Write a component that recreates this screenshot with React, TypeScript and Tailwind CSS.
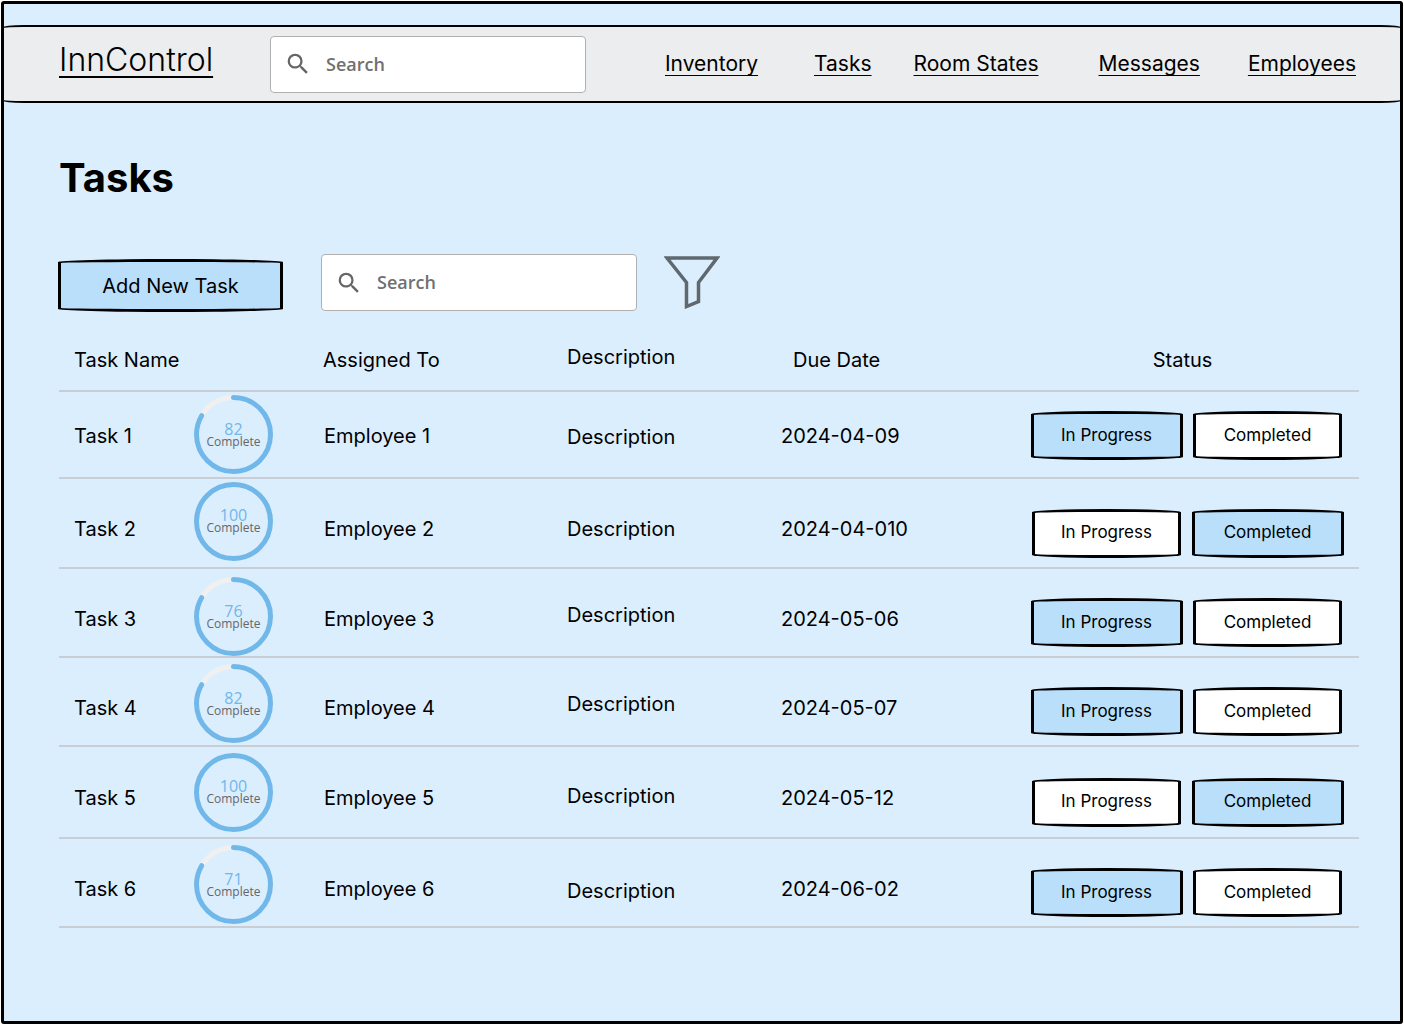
import React from "react";

const sketchEdge = "m-[3px] ring-3 ring-black rounded-[50%/1px]";

type Task = {
  name: string;
  percent: number;
  employee: string;
  due: string;
  done: boolean;
  row: string;
  text: string;
  ring: string;
  description: string;
  status: string;
};

const tasks: Task[] = [
  { name: "Task 1", percent: 82, employee: "Employee 1", due: "2024-04-09", done: false, row: "h-[87px]", text: "pt-0.5", ring: "pt-0", description: "pt-1", status: "pt-0.5" },
  { name: "Task 2", percent: 100, employee: "Employee 2", due: "2024-04-010", done: true, row: "h-[90px]", text: "pt-3", ring: "pb-1", description: "pt-3", status: "pt-5" },
  { name: "Task 3", percent: 76, employee: "Employee 3", due: "2024-05-06", done: false, row: "h-[89px]", text: "pt-3", ring: "pt-2", description: "pt-1", status: "pt-5" },
  { name: "Task 4", percent: 82, employee: "Employee 4", due: "2024-05-07", done: false, row: "h-[89px]", text: "pt-3", ring: "pt-1", description: "pt-1", status: "pt-5" },
  { name: "Task 5", percent: 100, employee: "Employee 5", due: "2024-05-12", done: true, row: "h-[92px]", text: "pt-3", ring: "pt-0", description: "pt-2", status: "pt-5" },
  { name: "Task 6", percent: 71, employee: "Employee 6", due: "2024-06-02", done: false, row: "h-[89px]", text: "pt-3", ring: "pt-1", description: "pt-4", status: "pt-5" },
];

const links = [
  { label: "Inventory", gap: "" },
  { label: "Tasks", gap: "ml-14" },
  { label: "Room States", gap: "ml-[42px]" },
  { label: "Messages", gap: "ml-15" },
  { label: "Employees", gap: "ml-12" },
];

function SearchBox({ label }: { label: string }) {
  return (
    <label className="flex h-[57px] w-[316px] items-center gap-4 rounded-[4px] border border-[#b0b0b0] bg-white pl-[15px] pr-4">
      <svg viewBox="0 0 24 24" className="size-6 shrink-0 fill-[#666666] scale-115" aria-hidden="true">
        <path d="M15.5 14h-.79l-.28-.27A6.471 6.471 0 0 0 16 9.5 6.5 6.5 0 1 0 9.5 16c1.61 0 3.09-.59 4.23-1.57l.27.28v.79l5 4.99L20.49 19l-4.99-5zm-6 0C7.01 14 5 11.99 5 9.5S7.01 5 9.5 5 14 7.01 14 9.5 11.99 14 9.5 14z" />
      </svg>
      <input
        type="search"
        aria-label={label}
        placeholder="Search"
        className="w-full min-w-0 bg-transparent font-['Open_Sans',sans-serif] text-[18px] font-semibold text-[#666666] outline-none placeholder:text-[#707070]"
      />
    </label>
  );
}

function Ring({ percent }: { percent: number }) {
  return (
    <div className="relative size-[79px]">
      <svg viewBox="0 0 79 79" fill="none" strokeWidth="5" className="size-full" aria-hidden="true">
        <circle cx="39.5" cy="39.5" r="37" stroke="#f0f0f0" />
        <circle
          cx="39.5"
          cy="39.5"
          r="37"
          stroke="#70b7ea"
          strokeLinecap="round"
          pathLength={100}
          strokeDasharray={percent === 100 ? "100 0" : "83.5 100"}
          transform="rotate(-90 39.5 39.5)"
        />
      </svg>
      <div className="absolute inset-0 flex flex-col items-center justify-center font-['Open_Sans',sans-serif]">
        <span className="text-[16px] leading-[14px] font-medium text-[#70b7ea]">{percent}</span>
        <span className="text-[12px] leading-[12px] text-[#666666]">Complete</span>
      </div>
    </div>
  );
}

function StatusButton({ label, active }: { label: string; active: boolean }) {
  return (
    <button
      type="button"
      aria-pressed={active}
      className={`h-[43px] text-[17px] ${sketchEdge} ${active ? "w-[146px] bg-[#b9dffb]" : "w-[143px] bg-white"}`}
    >
      {label}
    </button>
  );
}

export default function App() {
  return (
    <div className="flex min-h-screen flex-col bg-white p-px font-['Inter',sans-serif] text-black">
      <div className="flex-1 rounded-[3px] border-[3px] border-black bg-[#dbeefe] pt-[23px]">
        <header className="flex items-center rounded-[20px/1px] bg-[#ecedee] pr-11 pl-[55px] ring-2 ring-black">
          <div className="flex h-[74px] items-center">
            <a href="#" className="mb-2 text-[32px] leading-10 font-[350] underline decoration-2 underline-offset-[5px]">
              InnControl
            </a>
          </div>
          <div className="ml-[57px]">
            <SearchBox label="Search site" />
          </div>
          <nav className="ml-auto flex text-[21px] leading-7">
            {links.map((l) => (
              <a key={l.label} href="#" className={`underline decoration-1 underline-offset-4 [text-decoration-skip-ink:none] ${l.gap}`}>
                {l.label}
              </a>
            ))}
          </nav>
        </header>

        <main className="px-[42px] pt-[52px]">
          <h1 className="pl-[13px] text-[40px] leading-[50px] font-bold">Tasks</h1>

          <div className="mt-[51px] flex items-start pl-3">
            <button type="button" className="m-[3px] mt-2 h-[47px] w-[219px] rounded-[50%/1px] bg-[#b9dffb] text-[20px] ring-3 ring-black">
              Add New Task
            </button>
            <div className="ml-[38px]">
              <SearchBox label="Search tasks" />
            </div>
            <button type="button" aria-label="Filter tasks" className="ml-[27px] mt-0.5">
              <svg viewBox="0 0 56 53" className="h-[53px] w-14" fill="none" stroke="#5f686e" strokeWidth="3.5" aria-hidden="true">
                <path d="M3 2h50L34.500 26.500V45.500L22.500 50.500V26.500Z" />
              </svg>
            </button>
          </div>

          <div className="pr-3 pl-[13px]">
            <table className="w-full table-fixed border-collapse text-left text-[20px]">
              <colgroup>
                <col className="w-[135px]" />
                <col className="w-[114px]" />
                <col className="w-[243px]" />
                <col className="w-[214px]" />
                <col className="w-[245px]" />
                <col className="w-[349px]" />
              </colgroup>
              <thead>
                <tr className="h-[79px] border-b-2 border-[#c8ced3] [&>th]:font-normal">
                  <th scope="col" colSpan={2} className="pt-[18px] pl-[15px]">Task Name</th>
                  <th scope="col" className="pt-[18px] pl-[15px]">Assigned To</th>
                  <th scope="col" className="pt-3 pl-4">Description</th>
                  <th scope="col" className="pt-[18px] pl-7">Due Date</th>
                  <th scope="col" className="pt-[18px] pr-1 text-center">Status</th>
                </tr>
              </thead>
              <tbody>
                {tasks.map((t) => (
                  <tr key={t.name} className={`border-b-2 border-[#c8ced3] ${t.row}`}>
                    <td className={`pl-[15px] ${t.text}`}>{t.name}</td>
                    <td className={t.ring}>
                      <Ring percent={t.percent} />
                    </td>
                    <td className={`pl-4 ${t.text}`}>{t.employee}</td>
                    <td className={`pl-4 ${t.description}`}>Description</td>
                    <td className={`pl-4 ${t.text}`}>{t.due}</td>
                    <td className={`pl-4 ${t.status}`}>
                      <div className="grid w-[322px] grid-cols-2 justify-items-center">
                        <StatusButton label="In Progress" active={!t.done} />
                        <StatusButton label="Completed" active={t.done} />
                      </div>
                    </td>
                  </tr>
                ))}
              </tbody>
            </table>
          </div>
        </main>
      </div>
    </div>
  );
}
